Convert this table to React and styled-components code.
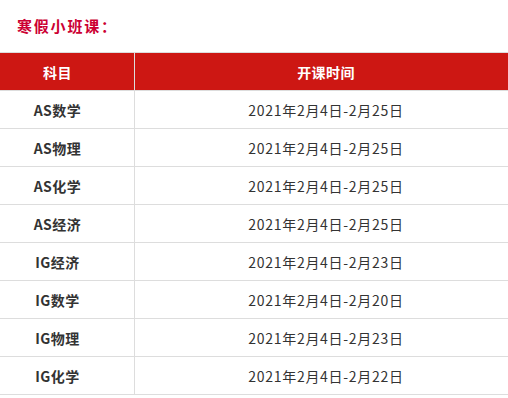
import React from 'react'
import styled, { createGlobalStyle } from 'styled-components'

const courses = [
    { name: 'AS数学', date: '2021年2月4日-2月25日' },
    { name: 'AS物理', date: '2021年2月4日-2月25日' },
    { name: 'AS化学', date: '2021年2月4日-2月25日' },
    { name: 'AS经济', date: '2021年2月4日-2月25日' },
    { name: 'IG经济', date: '2021年2月4日-2月23日' },
    { name: 'IG数学', date: '2021年2月4日-2月20日' },
    { name: 'IG物理', date: '2021年2月4日-2月23日' },
    { name: 'IG化学', date: '2021年2月4日-2月22日' },
]

export default function App() {
    return (
        <Page>
            <GlobalStyle />
            <Title>寒假小班课：</Title>
            <Table>
                <thead>
                    <tr>
                        <HeadCell $narrow>科目</HeadCell>
                        <HeadCell>开课时间</HeadCell>
                    </tr>
                </thead>
                <tbody>
                    {courses.map((c) => (
                        <tr key={c.name}>
                            <NameCell>{c.name}</NameCell>
                            <DateCell>{c.date}</DateCell>
                        </tr>
                    ))}
                </tbody>
            </Table>
        </Page>
    )
}

const GlobalStyle = createGlobalStyle`
    html, body {
        margin: 0;
        padding: 0;
        background: #fff;
        overflow: hidden;
    }
    body {
        font-family: "Noto Sans CJK SC", "Noto Sans", sans-serif;
    }
`
const Page = styled.div`
    width: 508px;
    height: 398px;
    overflow: hidden;
    padding-top: 14px;
    box-sizing: border-box;
`
const Title = styled.div`
    margin: 0 0 14px 17px;
    height: 24px;
    line-height: 24px;
    font-size: 15px;
    font-weight: bold;
    letter-spacing: 1.8px;
    color: #cc0033;
`
const Table = styled.table`
    margin-left: -19px;
    width: 537px;
    border-collapse: separate;
    border-spacing: 0;
    border-top: 1px solid #ddd;
    table-layout: fixed;
    font-size: 14px;
    color: #333;
    td, th {
        border-right: 1px solid #ddd;
        border-bottom: 1px solid #ddd;
        box-sizing: border-box;
        height: 38px;
        padding: 0;
        text-align: center;
    }
`
const HeadCell = styled.th`
    width: ${(p) => (p.$narrow ? '154px' : 'auto')};
    background: #cd1713;
    color: #fff;
    font-weight: bold;
    letter-spacing: 0.4px;
`
const NameCell = styled.td`
    font-weight: bold;
    letter-spacing: 0.5px;
`
const DateCell = styled.td`
    font-weight: normal;
    letter-spacing: 0.7px;
`
